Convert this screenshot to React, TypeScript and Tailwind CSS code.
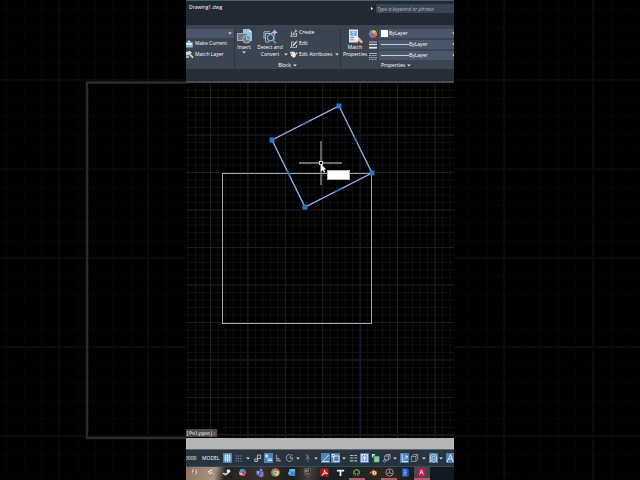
import type { ReactNode } from "react";
import { clsx } from "clsx";

const GRIPS = [
  [153, 23],
  [186, 90],
  [119, 124],
  [86, 57],
];

const EDGE_GRIPS = [
  { x: 119.5, y: 40, angle: -27 },
  { x: 169.5, y: 56.5, angle: 63.5 },
  { x: 152.5, y: 107, angle: -27 },
  { x: 102.5, y: 90.5, angle: 63.5 },
];

function Caret({ className }: { className?: string }) {
  return (
    <svg viewBox="0 0 4 3" className={clsx("h-[3px] w-1 shrink-0 fill-gray-200", className)}>
      <path d="M0.2 0.4h3.6L2 2.6z" />
    </svg>
  );
}

function Backdrop() {
  return (
    <svg className="absolute inset-0 size-full" aria-hidden="true">
      <defs>
        <pattern id="far-minor" x="59" y="80" width="17.8" height="17.8" patternUnits="userSpaceOnUse">
          <path d="M0.5 0V18M0 0.5H18" stroke="#050505" strokeWidth="1.5" />
        </pattern>
        <pattern id="far-major" x="58" y="79" width="89" height="89" patternUnits="userSpaceOnUse">
          <path d="M1 0V89M0 1H89" stroke="#0a0a0a" strokeWidth="2" />
        </pattern>
      </defs>
      <rect width="100%" height="100%" fill="url(#far-minor)" />
      <rect width="100%" height="100%" fill="url(#far-major)" />
      <path d="M320 82.5H87V438H320" fill="none" stroke="#2b2b2b" strokeWidth="2.5" />
    </svg>
  );
}

function InsertIcon() {
  return (
    <svg viewBox="0 0 15 15" className="size-[15px]">
      <path d="M6 0h6l3 3v9H6z" fill="#8cc4ee" />
      <path d="M12 0v3h3z" fill="#d5ecfb" />
      <rect x="0.5" y="4.5" width="9.500" height="7" fill="#6a7580" stroke="#a3adb7" />
      <circle cx="9.5" cy="10.3" r="3.8" fill="#6b7a89" fillOpacity=".85" stroke="#b6c1cd" strokeWidth=".9" />
      <path d="M9.5 10.300V7.500M9.500 10.300h2.800" stroke="#dbe3ea" strokeWidth=".7" />
    </svg>
  );
}

function DetectIcon() {
  return (
    <svg viewBox="0 0 15 15" className="size-[15px]" fill="none">
      <path d="M2.5 12.5V4.5h7M1 10V2.8h6" stroke="#aeb6bf" />
      <path d="M2.5 13h4" stroke="#aeb6bf" />
      <circle cx="7.5" cy="8.7" r="3.2" fill="#334a5e" stroke="#a9c3d8" />
      <path d="M9.8 11l3 3.2" stroke="#62a7dc" strokeWidth="1.5" />
      <path d="M11 6.5v4.5" stroke="#aeb6bf" />
      <path d="M11.5 0l1.1 2.2L15 3.4l-2.4 1.1-1.1 2.4-1.1-2.4L8 3.4l2.4-1.2z" fill="#c9a5f5" />
    </svg>
  );
}

function CreateIcon() {
  return (
    <svg viewBox="0 0 8 8" className="size-2" fill="none">
      <path d="M1.5 2.500v4.8h5V4M0 7.3h1.500M3.200 4h1.600v1.600H3.200z" stroke="#c4cbd2" strokeWidth=".9" />
      <path d="M5.8 0l.6 1.5L8 2l-1.6.6-.6 1.6-.6-1.6L3.6 2l1.6-.5z" fill="#f0b66b" />
    </svg>
  );
}

function EditIcon() {
  return (
    <svg viewBox="0 0 8 8" className="size-2" fill="none">
      <path d="M4 2H1.5v5.3h5V5M0 7.300h1.500" stroke="#c4cbd2" strokeWidth=".9" />
      <path d="M3 5.5L7 1.2" stroke="#e8eaed" strokeWidth="1.3" />
      <path d="M6.3 2L7.4.8" stroke="#dd6f61" strokeWidth="1.3" />
    </svg>
  );
}

function AttributesIcon() {
  return (
    <svg viewBox="0 0 8 8" className="size-2" fill="none">
      <path d="M0 .8h4.500l1.5 3-2 3-3-2z" fill="#e5e7ea" />
      <path d="M3 6L7.3 1.6" stroke="#f1f1f1" strokeWidth="1.2" />
      <path d="M1 2.2l1 1.3" stroke="#d16a53" />
      <path d="M4 6.8L5.7 5" stroke="#dfa35b" />
    </svg>
  );
}

function MakeCurrentIcon() {
  return (
    <svg viewBox="0 0 8 8" className="size-2">
      <path d="M0 4.5h7.500L6.500 7.500H0z" fill="#78b7e6" />
      <path d="M0 2.6h7L6 5H0z" fill="#e3e8ec" />
      <path d="M3 0l2.500 2.500h-5z" fill="#9fd2f5" />
    </svg>
  );
}

function MatchLayerIcon() {
  return (
    <svg viewBox="0 0 8 8" className="size-2">
      <path d="M0 1l4-1 2 2-4 2H0z" fill="#d9dde1" />
      <path d="M0 4.5h3.4L3 7H0z" fill="#a8b0b8" />
      <path d="M3 3.5l1.4-.8L7.6 6 6.5 7.5z" fill="#e6d3b0" />
    </svg>
  );
}

function MatchPropertiesIcon() {
  return (
    <svg viewBox="0 0 15 15" className="size-[15px]">
      <path d="M1 0.5h9v13H1z" fill="#dfe5ea" />
      <path d="M2.3 2h6.4v4.8H2.3z" fill="#6badde" />
      <path d="M4 3.2h3M5.5 2.5V6" stroke="#e8f4fc" strokeWidth=".7" />
      <path d="M2.3 8.500h4M2.3 10.800h3.4" stroke="#7c8793" strokeWidth=".9" />
      <path d="M6 7.6l3-.9 2.5 2.6-2.4 2.5z" fill="#f3f1ea" />
      <path d="M9.5 11.3l2-2.2L15 12.7l-1.5 1.7z" fill="#e3b978" />
    </svg>
  );
}

function ColorWheel() {
  return (
    <svg viewBox="0 0 8 8" className="size-2">
      <path d="M4 4V0a4 4 0 0 1 3.5 2z" fill="#efc64c" />
      <path d="M4 4l3.5-2a4 4 0 0 1 0 4z" fill="#f08b42" />
      <path d="M4 4l3.5 2A4 4 0 0 1 4 8z" fill="#df4d66" />
      <path d="M4 4v4a4 4 0 0 1-3.5-2z" fill="#b25bd0" />
      <path d="M4 4L.5 6a4 4 0 0 1 0-4z" fill="#4b8fe2" />
      <path d="M4 4L.5 2A4 4 0 0 1 4 0z" fill="#5fc06a" />
    </svg>
  );
}

function LineweightIcon() {
  return (
    <svg viewBox="0 0 8 8" className="size-2" stroke="#dfe3e7">
      <path d="M0 1h8" strokeWidth=".8" />
      <path d="M0 3.5h8" strokeWidth="1.3" />
      <path d="M0 6.7h8" strokeWidth="1.8" />
    </svg>
  );
}

function LinetypeIcon() {
  return (
    <svg viewBox="0 0 8 8" className="size-2" stroke="#aab2ba" strokeWidth="1">
      <path d="M0 1.5h8" />
      <path d="M0 3.500h8" strokeDasharray="2 .7" />
      <path d="M0 5.500h8" strokeDasharray="1.200 .6" />
      <path d="M0 7.300h8" strokeDasharray="1 .5" />
    </svg>
  );
}

function SmallTool({ icon, label, menu }: { icon: ReactNode; label: string; menu?: boolean }) {
  return (
    <button className="flex h-[11px] items-center gap-px whitespace-nowrap">
      {icon}
      <span>{label}</span>
      {menu && <Caret className="ml-0.5" />}
    </button>
  );
}

function PropertyRow({ name, icon, sample }: { name: string; icon: ReactNode; sample: "color" | "line" }) {
  return (
    <label className="flex items-center gap-px">
      {icon}
      <span className="relative ml-px flex h-[9px] flex-1 items-center bg-[#4a566a]">
        {sample === "color" ? (
          <span className="absolute left-0.5 size-[7px] bg-white" />
        ) : (
          <span className="absolute left-0.5 h-px w-7 bg-[#c9ced4]" />
        )}
        <select
          aria-label={name}
          className={clsx(
            "h-full w-full appearance-none leading-[9px] outline-none",
            sample === "color" ? "pl-2.5" : "pl-[30px]",
          )}
        >
          <option>ByLayer</option>
        </select>
        <Caret className="absolute -right-0.5" />
      </span>
    </label>
  );
}

function Ribbon() {
  return (
    <div className="flex h-11 bg-[#3b4552] pt-1">
      <div className="flex w-[49px] shrink-0 flex-col border-r border-[#2c343e]">
        <label className="relative flex h-[9px] items-center bg-[#4a566a]">
          <select aria-label="Layer" className="h-full w-full appearance-none outline-none">
            <option></option>
          </select>
          <Caret className="absolute right-0.5" />
        </label>
        <SmallTool icon={<MakeCurrentIcon />} label="Make Current" />
        <SmallTool icon={<MatchLayerIcon />} label="Match Layer" />
      </div>

      <div className="flex w-[106px] shrink-0 flex-col justify-between border-r border-[#2c343e]">
        <div className="flex">
          <button className="flex w-[18px] flex-col items-center">
            <InsertIcon />
            <span className="leading-[7px]">Insert</span>
            <Caret />
          </button>
          <button className="relative flex w-[34px] flex-col items-center">
            <DetectIcon />
            <span className="whitespace-nowrap leading-[7px]">
              Detect and
              <br />
              Convert
            </span>
            <Caret className="absolute -right-px bottom-1" />
          </button>
          <div className="-mt-0.5 ml-[3px] flex flex-col">
            <SmallTool icon={<CreateIcon />} label="Create" />
            <SmallTool icon={<EditIcon />} label="Edit" />
            <SmallTool icon={<AttributesIcon />} label="Edit Attributes" menu />
          </div>
        </div>
        <button className="flex h-2 items-center justify-center gap-0.5">
          Block <Caret />
        </button>
      </div>

      <div className="flex min-w-0 flex-1 flex-col justify-between">
        <div className="flex">
          <button className="flex w-7 shrink-0 flex-col items-center">
            <MatchPropertiesIcon />
            <span className="leading-[7px]">
              Match
              <br />
              Properties
            </span>
          </button>
          <div className="flex flex-1 flex-col gap-0.5">
            <PropertyRow name="Color" icon={<ColorWheel />} sample="color" />
            <PropertyRow name="Lineweight" icon={<LineweightIcon />} sample="line" />
            <PropertyRow name="Linetype" icon={<LinetypeIcon />} sample="line" />
          </div>
        </div>
        <button className="flex h-2 items-center gap-0.5 pl-10">
          Properties <Caret />
        </button>
      </div>
    </div>
  );
}

function Canvas() {
  return (
    <main className="relative min-h-0 flex-1 overflow-hidden bg-black">
      <svg className="absolute inset-0 size-full" aria-label="Drawing area">
        <defs>
          <pattern id="minor" x="24" y="14" width="7.48" height="7.5" patternUnits="userSpaceOnUse">
            <path d="M0.5 0V8M0 0.5H8" stroke="#0f0f11" />
          </pattern>
          <pattern id="major" x="24" y="14" width="37.4" height="37.5" patternUnits="userSpaceOnUse">
            <path d="M0.5 0V38M0 0.5H38" stroke="#1d1e23" />
          </pattern>
        </defs>
        <rect width="100%" height="100%" fill="url(#minor)" />
        <rect width="100%" height="100%" fill="url(#major)" />
        <path d="M174.5 240V355" stroke="#191b30" />
        <path d="M0 351.5H268" stroke="#2a1518" />

        <rect x="36.5" y="90.5" width="149" height="150" fill="none" stroke="#a8a8a8" />
        <path d="M153 23L186 90L119 124L86 57z" fill="none" stroke="#a3aef0" strokeWidth="1.3" />
        {EDGE_GRIPS.map((g) => (
          <rect
            key={`${g.x}-${g.y}`}
            x={g.x - 3.5}
            y={g.y - 1}
            width="7"
            height="2"
            fill="#2b6cab"
            transform={`rotate(${g.angle} ${g.x} ${g.y})`}
          />
        ))}
        {GRIPS.map(([x, y]) => (
          <rect key={`${x}-${y}`} x={x - 2.5} y={y - 2.5} width="5" height="5" fill="#2779cb" />
        ))}

        <path d="M113 80H133M137 80H156M135 58V78M135 82V102" stroke="#8e8e88" strokeWidth="1.3" />
        <rect x="133.5" y="78.5" width="3" height="3" fill="none" stroke="#d8d8d8" />
        <path d="M135 81v7.4l1.7-1.5 1.3 2.6 1.2-.6-1.2-2.5h2.2z" fill="#fff" />
      </svg>
      <input
        aria-label="Dynamic input"
        className="absolute left-[141px] top-[87px] h-2.5 w-[23px] border border-[#b9b9a8] bg-white text-black outline-none"
      />
      <p className="absolute bottom-px left-0 h-2 bg-[#4b4b4b] pr-px font-['DejaVu_Sans_Mono',monospace] leading-2 text-white">
        [Polygon]:
      </p>
    </main>
  );
}

const STATUS: { name: string; width: string; on?: boolean; menu?: boolean; art: ReactNode }[] = [
  { name: "Grid", width: "w-[11px]", on: true, art: <path d="M3 1v8M5 1v8M7 1v8M1 3h8M1 5h8M1 7h8" strokeWidth=".8" /> },
  { name: "Snap", width: "w-[19px]", menu: true, art: <path d="M2 3h7M2 5.5h7M2 8h7" strokeDasharray="1 1.6" /> },
  { name: "Infer", width: "w-[11px]", art: <path d="M5 6V2h3.5v3.5H5M2 6h3v2.5H2z" /> },
  { name: "Dynamic", width: "w-[10px]", on: true, art: <path d="M3 1v4M1 3h4M4 7.5h5M4 6h5" /> },
  { name: "Ortho", width: "w-[11px]", art: <path d="M3 1.5V8h5M3 5.5h2.5V8" strokeWidth=".8" /> },
  { name: "Polar", width: "w-[18px]", menu: true, art: <path d="M8.5 5A3.5 3.5 0 1 1 6 1.7M5 5h4M5 5l3-3.5" strokeWidth=".8" /> },
  { name: "Isodraft", width: "w-[18px]", menu: true, art: <path d="M5.5 1v8M3 2l5 4M2.5 6.5l3-2" strokeWidth=".7" opacity=".7" /> },
  { name: "Tracking", width: "w-[10px]", on: true, art: <path d="M1.5 8.5h7.5M1.5 8.5L8.5 2" strokeWidth=".9" /> },
  { name: "Object snap", width: "w-[18px]", on: true, menu: true, art: <path d="M3 3h6v5.5H3zM1 1.5h3V4H1z" strokeWidth=".9" /> },
  { name: "Lineweight", width: "w-[11px]", art: <path d="M1 2.5h4M1 5h4M1 7.8h4M6 2.5h3M6 5h3M6 7.8h3" strokeWidth="1.2" /> },
  { name: "Transparency", width: "w-[11px]", on: true, art: <path d="M1.5 1.5h7v7h-7zM1.5 5h7M5 1.5v7M1.5 1.5l7 7M8.5 1.5l-7 7" strokeWidth=".9" /> },
  {
    name: "Selection cycling",
    width: "w-[11px]",
    art: (
      <>
        <path d="M3.500 3.500h5.500V9H3.500z" fill="#7fd6a1" stroke="#5bb883" strokeWidth=".6" />
        <path d="M1 1h3.500v1.500h-2V4.500H1z" fill="#cde9da" stroke="none" />
      </>
    ),
  },
  { name: "3D snap", width: "w-[18px]", menu: true, art: <path d="M3 3l2-1.5h4v4L7 7H3zM3 3h4v4M7 3l2-1.5M3 6.5a1.4 1.4 0 1 0 .1 0" strokeWidth=".8" /> },
  { name: "Dynamic UCS", width: "w-[10px]", on: true, art: <path d="M2.5 1v7.5H9M4.5 6.5L8 3M5.5 3H8v2.5" strokeWidth=".9" /> },
  { name: "Filter", width: "w-[19px]", menu: true, art: <path d="M1.5 3.5h5v5h-5zM1.5 3.5L3.5 1.5h5v5l-2 2M6.5 3.5l2-2" strokeWidth=".7" /> },
  { name: "Gizmo", width: "w-[17px]", on: true, menu: true, art: <path d="M5 1l3.5 2v4L5 9 1.5 7V3zM5 3.2a1.8 1.8 0 1 0 .1 0M1 9l1.5-2M9 9L7.5 7" strokeWidth=".8" /> },
  { name: "Annotation", width: "w-[10px]", on: true, art: <path d="M1 9L5 1.5 8 9M3 6h4" /> },
];

function StatusBar() {
  return (
    <div className="flex h-[17px] items-center overflow-hidden border-b border-[#2b4f5c] bg-[#29333f]">
      <span className="-ml-px w-[17px] shrink-0">0000</span>
      <button className="w-[21px] shrink-0 text-left">MODEL</button>
      {STATUS.map((s) => (
        <button key={s.name} aria-label={s.name} className={clsx("flex shrink-0 items-center justify-between pr-px", s.width)}>
          <svg
            viewBox="0 0 10 10"
            className={clsx("h-2.5 w-[9px] shrink-0", s.on && "bg-[#4d83b5]")}
            fill="none"
            stroke={s.on ? "#e3f0fb" : "#b4bcc4"}
            preserveAspectRatio="none"
          >
            {s.art}
          </svg>
          {s.menu && <Caret className="mr-0.5" />}
        </button>
      ))}
    </div>
  );
}

const APPS: { name: string; running?: boolean; focused?: boolean; art: ReactNode }[] = [
  { name: "Navigator", art: <><path d="M3 1h4l1 4-3 4-3-4z" fill="#c9beb2" /><path d="M4 1h2L5.5 9z" fill="#d1492e" /><path d="M3 5l2 4 .5-5z" fill="#5f6a7a" /></> },
  { name: "Paint", art: <><path d="M2 4l5-3 1 5-3 2z" fill="#e6e2e4" /><path d="M4 5l4-2M5 9l2-4" stroke="#a2586b" /></> },
  { name: "Steam", art: <><path d="M1 6l4 1 4-4" stroke="#eef5fb" strokeWidth="1.6" /><circle cx="7" cy="3.3" r="2" fill="#d8ecf8" /><circle cx="3.8" cy="7" r="1.6" fill="#8ec3e8" /></> },
  { name: "Copilot", art: <><path d="M3 1h4L5 5H1z" fill="#3aa0e8" /><path d="M6 2h2l1.5 4H6z" fill="#8f5fe0" /><path d="M1 5h4l1 3H2z" fill="#e8bd4e" /><path d="M5 6h4L7 9H4z" fill="#dd5682" /></> },
  { name: "Teams", art: <><circle cx="6.8" cy="2.2" r="1.5" fill="#8187df" /><path d="M4 4h5.5v3A2.5 2.5 0 0 1 4 8z" fill="#7278d4" /><path d="M1 3h5v5H1z" fill="#4951ae" /><path d="M2.2 4.3h2.6M3.5 4.3v3" stroke="#fff" strokeWidth=".8" /></> },
  { name: "Chrome", art: <><circle cx="5" cy="5" r="4.5" fill="#e5b93b" /><path d="M5 5L1.1 2.8A4.5 4.5 0 0 1 8.9 2.8z" fill="#df4f3f" /><path d="M5 5L1.1 2.8A4.5 4.5 0 0 0 5 9.5z" fill="#3ea45a" /><circle cx="5" cy="5" r="2.2" fill="#fff" /><circle cx="5" cy="5" r="1.5" fill="#4384e6" /></> },
  { name: "Outlook", art: <><path d="M3 1h6v4L5 7 2 4z" fill="#58b7ea" /><path d="M3 5l6-1v5H3z" fill="#2f8ed3" /><path d="M1 4h4v4H1z" fill="#135fa3" /><circle cx="3" cy="6" r="1.1" stroke="#fff" strokeWidth=".7" /></> },
  { name: "Epic Games", art: <><path d="M1.5.5h7v7L5 9.5l-3.5-2z" fill="#2b2b2b" stroke="#aaa" strokeWidth=".4" /><path d="M3 2v3M3 2h1.2M3 3.5h1.2M5.5 5V2h1M3 6.5h4" stroke="#e8e8e8" strokeWidth=".7" /></> },
  { name: "Acrobat", art: <><rect x=".5" y=".5" width="9" height="9" fill="#b91613" /><path d="M2 8c2-1.2 3-3.4 3-6 .1 2.4 1.4 3.6 3.4 4C6 5.6 4 6 2 8z" stroke="#fff" strokeWidth=".9" /></> },
  { name: "Trimble", art: <path d="M1 2h8v2H6v5H4V4H1z" fill="#efefef" /> },
  { name: "Headset", running: true, art: <><path d="M2 7V5a3 3 0 0 1 6 0v2" stroke="#7fb53a" strokeWidth="1.2" /><path d="M3.5 5.5v3M6.5 5.5v3" stroke="#7fb53a" strokeWidth="1.1" /></> },
  { name: "Blender", art: <><path d="M1 6l4.5-4" stroke="#ec8d2d" strokeWidth="1.2" /><circle cx="6" cy="5.5" r="2.8" fill="#ec8d2d" /><circle cx="6" cy="5.5" r="1.6" fill="#fff" /><circle cx="6" cy="5.5" r=".9" fill="#2c5f9d" /></> },
  { name: "OBS", running: true, art: <><circle cx="5" cy="5" r="4" fill="#232323" stroke="#bdbdbd" strokeWidth=".8" /><path d="M5 5V2M5 5l2.6 1.5M5 5L2.4 6.5" stroke="#bdbdbd" strokeWidth=".9" /></> },
  { name: "Revit", art: <><path d="M1.5.5h6v9h-6z" fill="#2c6fd1" /><path d="M7.5.5L9 2v7.5H7.5z" fill="#184c98" /><path d="M3 3h3M3 5h3M3 7h3" stroke="#b9d4f8" strokeWidth=".7" /></> },
  { name: "AutoCAD", focused: true, art: <><path d="M1.5.5h7v9h-7z" fill="#d4145a" /><path d="M3 7l2-5 2 5M3.7 5.3h2.6" stroke="#fff" strokeWidth=".8" /></> },
];

function Taskbar() {
  return (
    <nav className="flex h-[13px] bg-[linear-gradient(100deg,#8d7358_0%,#a8977f_11%,#261f1a_15%,#3a3027_28%,#1d1d1a_40%,#453d32_46%,#172025_51%,#1e2324_64%,#30281f_76%,#151b1e_84%,#101a1e_100%)] pr-6">
      {APPS.map((a) => (
        <button
          key={a.name}
          aria-label={a.name}
          className={clsx(
            "flex flex-1 items-center justify-center border-b-2",
            a.running || a.focused ? "border-[#b5596c]" : "border-transparent",
            a.focused && "bg-[#4a4348]",
          )}
        >
          <svg viewBox="0 0 10 10" className="size-[9px]" fill="none">
            {a.art}
          </svg>
        </button>
      ))}
    </nav>
  );
}

export default function App() {
  return (
    <div className="relative flex h-screen justify-center overflow-hidden bg-black">
      <Backdrop />
      <div className="relative flex w-[268px] flex-col overflow-hidden font-['Open_Sans',sans-serif] text-[5px] font-medium leading-[7px] text-white">
        <header className="flex h-[25px] items-start justify-between border-t border-[#3d6675] bg-[#222932]">
          <h1 className="pl-[3px] pt-[3px]">Drawing1.dwg</h1>
          <div className="flex items-center gap-0.5 pt-[3px]">
            <Caret className="-rotate-90" />
            <input
              aria-label="Search"
              placeholder="Type a keyword or phrase"
              className="h-[9px] w-[78px] bg-[#3b4452] pl-px italic outline-none placeholder:text-[#b3bac3]"
            />
          </div>
        </header>
        <Ribbon />
        <div className="h-3.5 border-b-2 border-[#484d53] bg-[#262d37]" />
        <Canvas />
        <div className="h-3 border-b border-[#5f666d] bg-[#b5b5b5]" />
        <StatusBar />
        <Taskbar />
      </div>
    </div>
  );
}
